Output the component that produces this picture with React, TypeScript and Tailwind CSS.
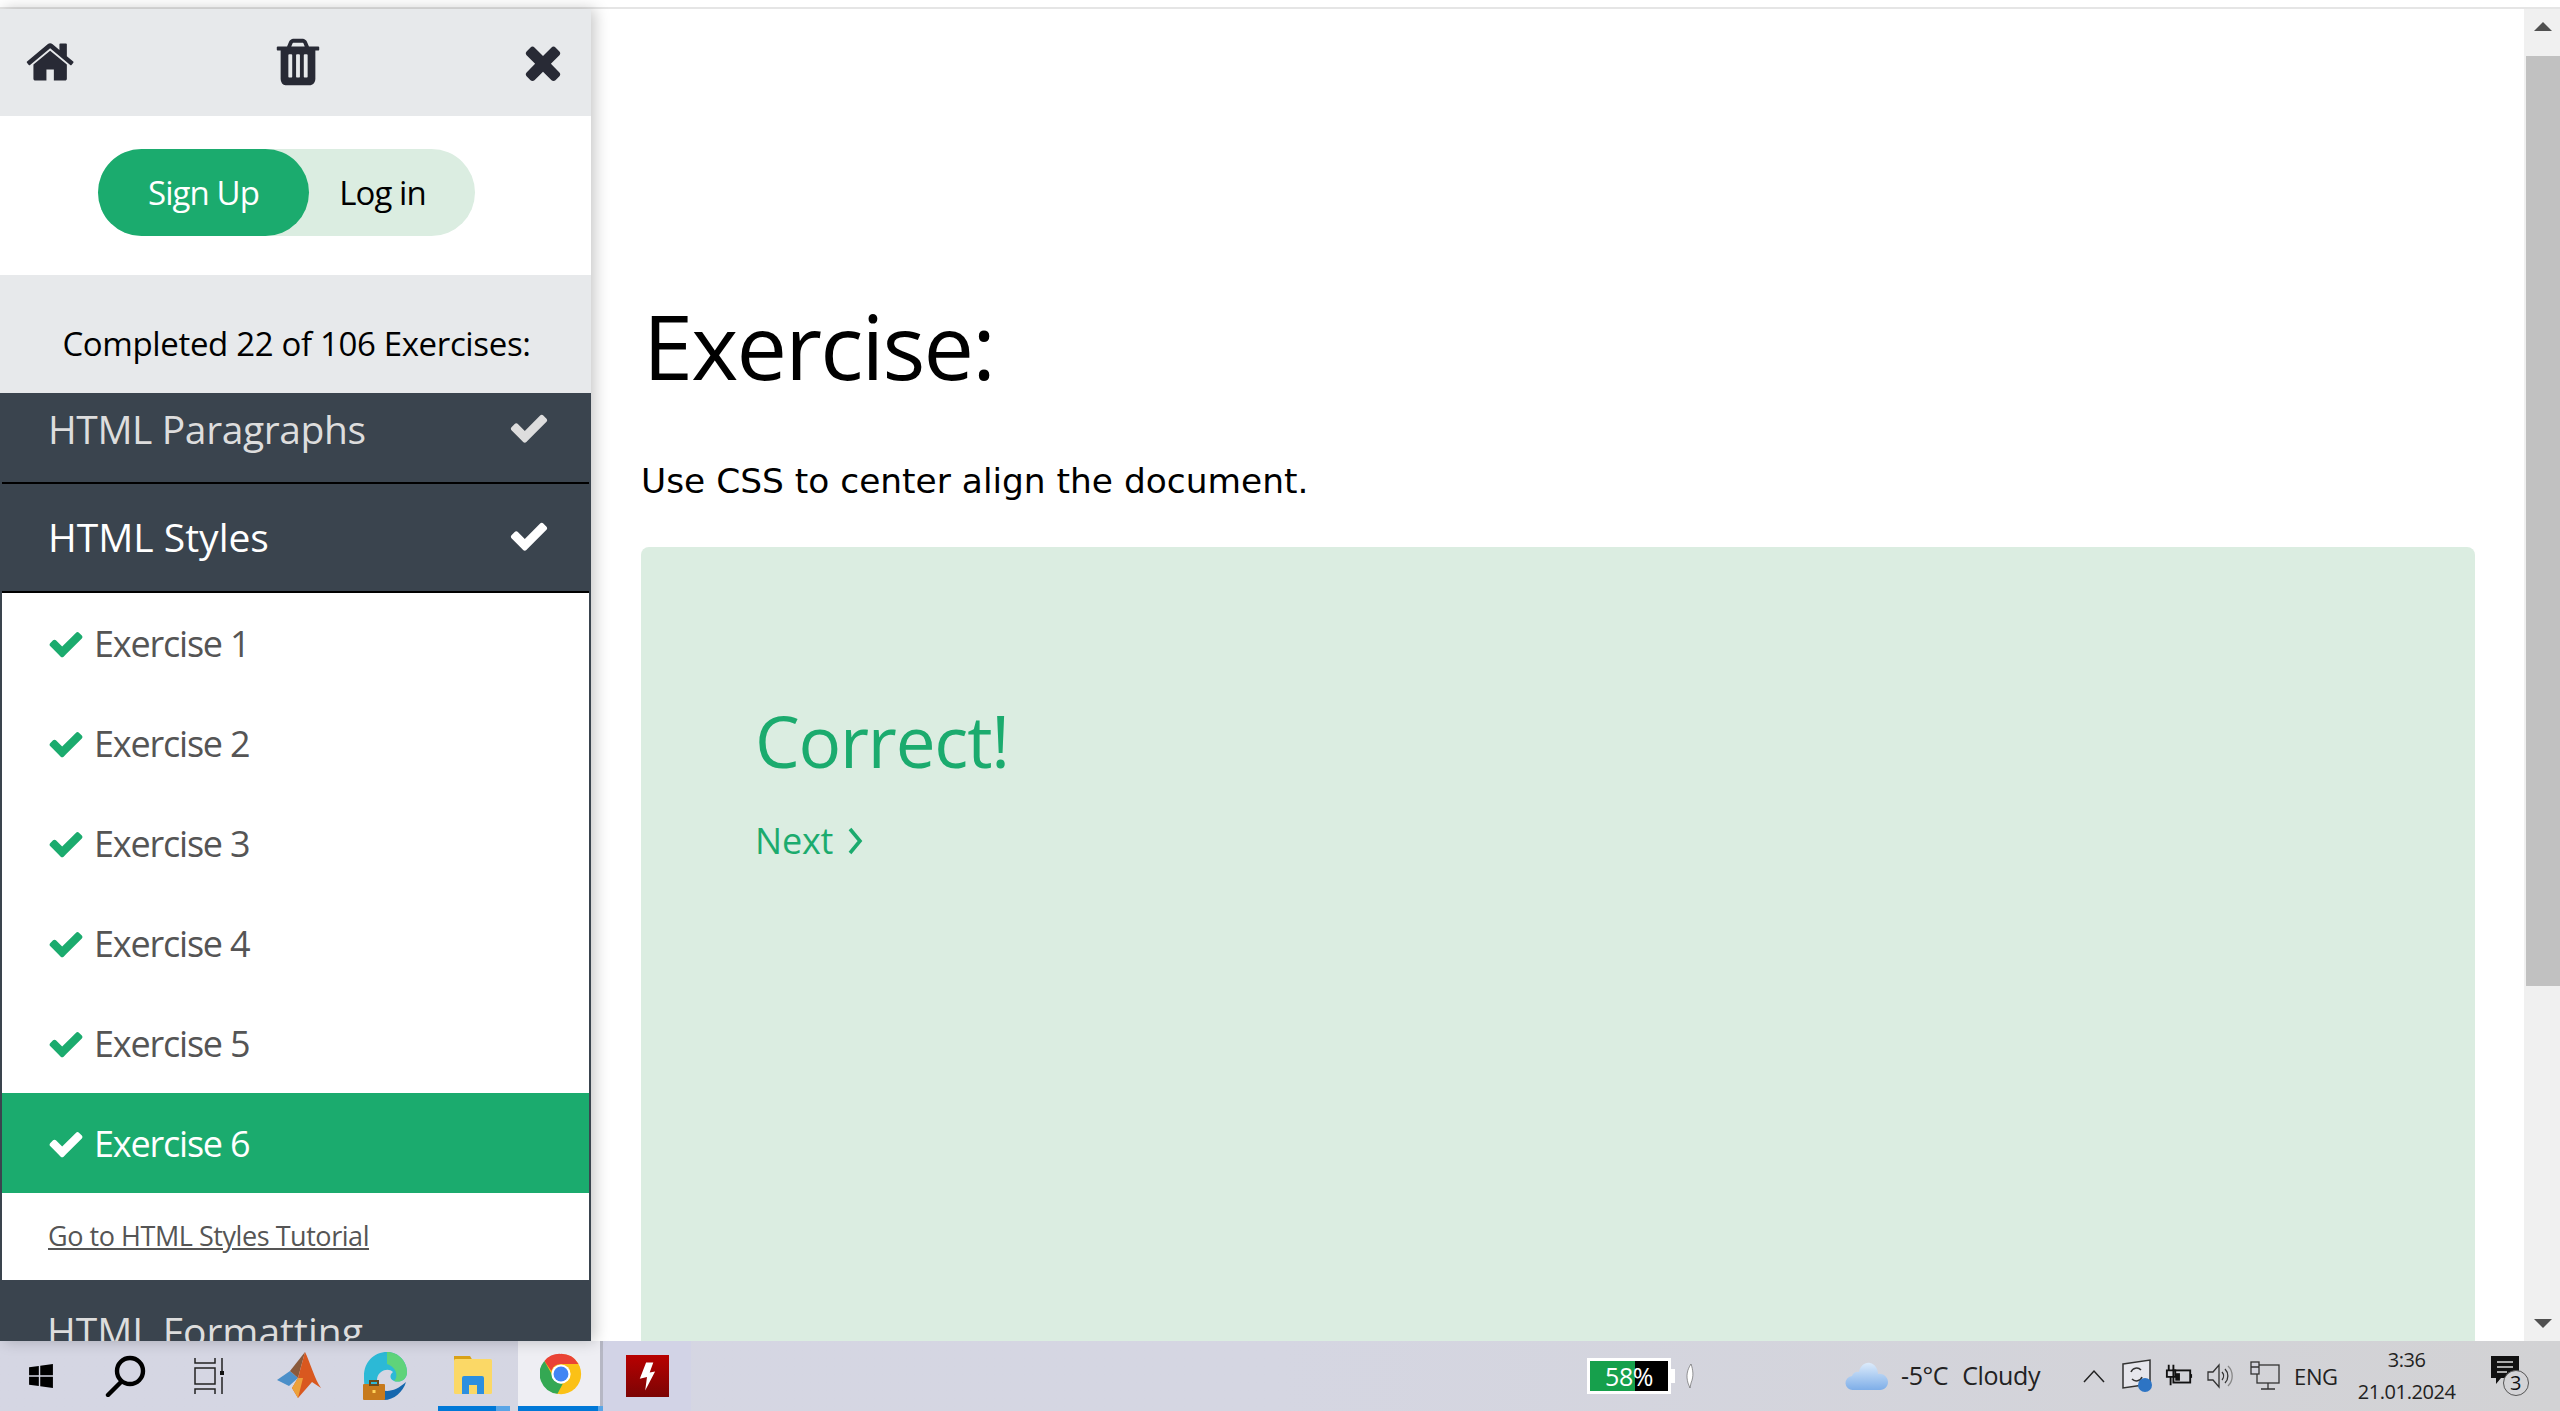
const segoe = "font-['Open_Sans',sans-serif]";

function HomeIcon({ className }: { className?: string }) {
  return (
    <svg viewBox="0 0 1792 1792" className={className} fill="currentColor">
      <path d="M1408 992v480q0 26-19 45t-45 19h-384v-384h-256v384h-384q-26 0-45-19t-19-45v-480q0-1 .5-3t.5-3l575-474 575 474q1 2 1 6zm223-69l-62 74q-8 9-21 11h-3q-13 0-21-7l-692-577-692 577q-12 8-24 7-13-2-21-11l-62-74q-8-10-7-23.5t11-21.5l719-599q32-26 76-26t76 26l244 204v-195q0-14 9-23t23-9h192q14 0 23 9t9 23v408l219 182q10 8 11 21.5t-7 23.5z" />
    </svg>
  );
}

function TrashIcon({ className }: { className?: string }) {
  return (
    <svg viewBox="0 0 1792 1792" className={className} fill="currentColor">
      <path d="M704 1376v-704q0-14-9-23t-23-9h-64q-14 0-23 9t-9 23v704q0 14 9 23t23 9h64q14 0 23-9t9-23zm256 0v-704q0-14-9-23t-23-9h-64q-14 0-23 9t-9 23v704q0 14 9 23t23 9h64q14 0 23-9t9-23zm256 0v-704q0-14-9-23t-23-9h-64q-14 0-23 9t-9 23v704q0 14 9 23t23 9h64q14 0 23-9t9-23zm-544-992h448l-48-117q-7-9-17-11h-317q-10 2-17 11zm928 32v64q0 14-9 23t-23 9h-96v948q0 83-47 143.5t-113 60.5h-832q-66 0-113-58.5t-47-141.5v-952h-96q-14 0-23-9t-9-23v-64q0-14 9-23t23-9h309l70-167q15-37 54-63t79-26h320q40 0 79 26t54 63l70 167h309q14 0 23 9t9 23z" />
    </svg>
  );
}

function CloseIcon({ className }: { className?: string }) {
  return (
    <svg viewBox="0 0 1792 1792" className={className} fill="currentColor">
      <path d="M1490 1322q0 40-28 68l-136 136q-28 28-68 28t-68-28l-294-294-294 294q-28 28-68 28t-68-28l-136-136q-28-28-28-68t28-68l294-294-294-294q-28-28-28-68t28-68l136-136q28-28 68-28t68 28l294 294 294-294q28-28 68-28t68 28l136 136q28 28 28 68t-28 68l-294 294 294 294q28 28 28 68z" />
    </svg>
  );
}

function CheckIcon({ className }: { className?: string }) {
  return (
    <svg viewBox="0 0 1792 1792" className={className} fill="currentColor">
      <path d="M1671 566q0 40-28 68l-724 724-136 136q-28 28-68 28t-68-28l-136-136-362-362q-28-28-28-68t28-68l136-136q28-28 68-28t68 28l294 295 656-657q28-28 68-28t68 28l136 136q28 28 28 68z" />
    </svg>
  );
}

function Windows() {
  return (
    <svg viewBox="0 0 24 24" className="w-[26px] h-[26px]" fill="#000">
      <path d="M1 4l9-1.3V11.3H1zM11.3 2.5L23 1v10.3H11.3zM1 12.7h9v8.6L1 20zM11.3 12.7H23V23l-11.7-1.6z" />
    </svg>
  );
}

function Search() {
  return (
    <svg viewBox="0 0 42 42" className="w-[42px] h-[42px]" fill="none" stroke="#000">
      <circle cx="25" cy="16" r="13" strokeWidth="4.4" />
      <path d="M16 27L3 40" strokeWidth="4.4" strokeLinecap="round" />
    </svg>
  );
}

function TaskView() {
  return (
    <svg viewBox="0 0 30 36" className="w-[30px] h-[36px]" fill="none" stroke="#222" strokeWidth="1.5">
      <path d="M1 0v5h20V0M1 10h20v16H1zM1 36v-5h20v5M28 0v13M28 19v17" />
      <rect x="26" y="13" width="4" height="4" fill="#111" stroke="none" />
    </svg>
  );
}

function Matlab() {
  return (
    <svg viewBox="0 0 44 48" className="w-[44px] h-[48px]">
      <path d="M0 28L13 19 21 26 12 34z" fill="#4b8fc9" />
      <path d="M13 19L28 0 21 26z" fill="#8a5a3c" />
      <path d="M28 0C33 10 38 28 44 36L35 30 21 46 15 36 21 26z" fill="#d9581f" />
      <path d="M21 26L15 36 21 46 26 26z" fill="#eda13a" />
    </svg>
  );
}

function EdgeDev() {
  return (
    <svg viewBox="0 0 44 48" className="w-[44px] h-[48px]">
      <path d="M1 24C1 10 11 0 24 0c12 0 20 10 20 20 0 8-7 11-13 9-5-2-4-7-1-9-3-3-8-3-12 0-4 3-5 8-3 12L2 36C1 32 1 28 1 24z" fill="#2cb9d6" />
      <path d="M24 0c12 0 20 10 20 20 0 8-7 11-13 9 4-3 4-13-7-17z" fill="#5fd37a" />
      <path d="M14 34c6 8 18 6 29-4-3 10-12 18-22 18-3 0-5-1-7-2z" fill="#1567ae" />
      <rect x="0" y="32" width="22" height="16" rx="1" fill="#c77a1c" />
      <rect x="7" y="29" width="8" height="4" fill="none" stroke="#6b4a1a" strokeWidth="2" />
      <rect x="9.5" y="38" width="3" height="3" fill="#ffd35a" />
    </svg>
  );
}

function Folder() {
  return (
    <svg viewBox="0 0 38 44" className="w-[38px] h-[44px]">
      <path d="M0 4h16l3 5H0z" fill="#d9a116" />
      <rect x="0" y="7" width="38" height="35" rx="1.5" fill="#fbd866" />
      <path d="M8 42V26a2 2 0 012-2h18a2 2 0 012 2v16h-7v-9h-8v9z" fill="#2c8fe0" />
    </svg>
  );
}

function Chrome() {
  return (
    <svg viewBox="0 0 48 48" className="w-[42px] h-[42px]">
      <circle cx="24" cy="24" r="23" fill="#fbc116" />
      <path d="M24 1a23 23 0 0120 11.5H24a11.5 11.5 0 00-11 8L5 9A23 23 0 0124 1z" fill="#ea4335" />
      <path d="M5 9l9 16a11.5 11.5 0 0012 10L20 46.7A23 23 0 015 9z" fill="#34a853" />
      <circle cx="24" cy="24" r="11" fill="#fff" />
      <circle cx="24" cy="24" r="8.5" fill="#4285f4" />
    </svg>
  );
}

function FlashBox() {
  return (
    <div className="w-[43px] h-[42px] bg-gradient-to-b from-[#b80000] to-[#7c0404] flex items-center justify-center">
      <svg viewBox="0 0 20 34" className="w-[18px] h-[34px]" fill="#fff">
        <path d="M9 2l8 0-4 11 6-1L8 33l2-15-8 2z" />
      </svg>
    </div>
  );
}

function Cloud() {
  return (
    <svg viewBox="0 0 44 30" className="w-[44px] h-[30px]">
      <defs>
        <linearGradient id="cloudFill" x1="0" y1="0" x2="0" y2="1">
          <stop offset="0" stopColor="#dcebfb" />
          <stop offset="1" stopColor="#7eaee8" />
        </linearGradient>
      </defs>
      <path d="M8 29a7 7 0 01-1-14c1-3 4-5 7-4 1-6 6-10 11-9 5 1 8 6 8 11 6-1 10 4 10 8s-3 8-8 8z" fill="url(#cloudFill)" />
    </svg>
  );
}

function TrayIcons() {
  return (
    <div className="flex items-center text-[#222]">
      <svg viewBox="0 0 24 14" className="w-[24px] h-[14px] mr-[16px]" fill="none" stroke="#222" strokeWidth="1.5">
        <path d="M2 13L12 2l10 11" />
      </svg>
      <svg viewBox="0 0 30 34" className="w-[30px] h-[34px] mr-[13px]" fill="none">
        <path d="M1 5L28 1v24L1 29z" fill="#e6e6ec" stroke="#333" strokeWidth="1.5" />
        <path d="M9 13a6 6 0 0110-2M20 18a6 6 0 01-10 2" stroke="#333" strokeWidth="1.5" />
        <circle cx="23" cy="26" r="7" fill="#2d74c4" />
      </svg>
      <svg viewBox="0 0 30 24" className="w-[28px] h-[24px] mr-[14px]" fill="none" stroke="#111" strokeWidth="2">
        <path d="M4 0v6M9 0v6M2 6h9v7H2zM6 13v9" />
        <rect x="9" y="6" width="18" height="13" />
        <rect x="11" y="9" width="5" height="8" fill="#111" stroke="none" />
        <path d="M28 10v4" />
      </svg>
      <svg viewBox="0 0 26 26" className="w-[26px] h-[26px] mr-[17px]" fill="none" stroke="#333" strokeWidth="1.3">
        <path d="M1 9h5l6-7v22l-6-7H1z" />
        <path d="M15 9a6 6 0 010 8M18 6a10 10 0 010 14" />
        <path d="M21 3a14 14 0 010 20" stroke="#888" />
      </svg>
      <svg viewBox="0 0 30 30" className="w-[30px] h-[30px]" fill="none" stroke="#333" strokeWidth="1.3">
        <rect x="7" y="4" width="22" height="18" />
        <rect x="1" y="1" width="8" height="12" fill="#d3d3dc" />
        <path d="M1 6h8M18 22v6M11 28h14" />
      </svg>
    </div>
  );
}

function ExerciseRow({ n, active }: { n: number; active?: boolean }) {
  return (
    <div
      className={`h-[100px] flex items-center pl-[45px] pt-[2px] text-[36px] ${
        active ? "bg-[#1bab6e] text-white" : "bg-white text-[#555]"
      }`}
    >
      <CheckIcon className={`w-[38px] h-[38px] mr-[9px] ${active ? "text-white" : "text-[#1bab6e]"}`} />
      <span className="tracking-[-1.2px]">Exercise {n}</span>
    </div>
  );
}

function Sidebar() {
  return (
    <aside className={`relative z-10 w-[591px] shrink-0 flex flex-col overflow-hidden shadow-[4px_0_14px_rgba(0,0,0,0.22)] ${segoe}`}>
      <div className="h-[107px] shrink-0 bg-[#e7e9eb] flex items-center justify-between pb-[2px] pl-[26px] pr-[22px] text-[#282a35]">
        <HomeIcon className="w-[52px] h-[52px]" />
        <TrashIcon className="w-[54px] h-[54px]" />
        <CloseIcon className="w-[52px] h-[52px]" />
      </div>
      <div className="h-[159px] shrink-0 bg-white flex items-center justify-center pr-[18px] pb-[6px]">
        <div className="w-[377px] h-[87px] rounded-full bg-[#dbede1] flex items-center text-[33px] tracking-[-0.9px]">
          <span className="w-[211px] h-full rounded-full bg-[#1bab6e] text-white flex items-center justify-center">Sign Up</span>
          <span className="flex-1 text-center text-black pr-[19px]">Log in</span>
        </div>
      </div>
      <div className="h-[118px] shrink-0 bg-[#e7e9eb] flex items-end justify-center pb-[25px] pl-[2px] text-[33px] tracking-[-0.35px] text-black">
        Completed 22 of 106 Exercises:
      </div>

      <div className="flex-1 min-h-0 bg-[#3a444e] overflow-hidden">
        <div className="h-[89px] flex items-center justify-between pb-[16px] pl-[48px] pr-[41px] text-[39px] tracking-[-0.4px] text-[#ddd]">
          <span>HTML Paragraphs</span>
          <CheckIcon className="w-[42px] h-[42px] mb-[3px] text-[#ddd]" />
        </div>
        <div className="h-[2px] mx-[2px] bg-black" />
        <div className="h-[107px] flex items-center justify-between pl-[48px] pr-[41px] text-[39px] text-white">
          <span>HTML Styles</span>
          <CheckIcon className="w-[42px] h-[42px] mb-[3px] text-white" />
        </div>
        <div className="mx-[2px] bg-white">
          <div className="h-[2px] bg-black" />
          {[1, 2, 3, 4, 5].map((n) => (
            <ExerciseRow key={n} n={n} />
          ))}
          <ExerciseRow n={6} active />
          <div className="h-[87px] flex items-center pl-[46px] text-[27px] tracking-[-0.45px] text-[#555] underline">
            Go to HTML Styles Tutorial
          </div>
        </div>
        <div className="pt-[22px] pl-[47px] text-[39px] leading-[58px] text-[#ddd]">HTML Formatting</div>
      </div>
    </aside>
  );
}

function Scrollbar() {
  return (
    <div className="w-[36px] shrink-0 bg-[#f0f0f0] flex flex-col">
      <div className="h-[47px] shrink-0 flex justify-center pt-[13px] pl-[2px]">
        <div className="w-0 h-0 border-x-[9px] border-x-transparent border-b-[9px] border-b-[#505050]" />
      </div>
      <div className="h-[930px] shrink-0 ml-[2px] bg-[#c1c1c1]" />
      <div className="flex-1 flex items-end justify-center pl-[2px] pb-[13px]">
        <div className="w-0 h-0 border-x-[9px] border-x-transparent border-t-[9px] border-t-[#505050]" />
      </div>
    </div>
  );
}

function Content() {
  return (
    <main className="flex-1 min-w-0 flex flex-col pl-[50px] pr-[49px] overflow-hidden">
      <h1 className={`mt-[276px] ml-[2px] text-[90px] leading-[120px] tracking-[-1.8px] text-black ${segoe}`}>Exercise:</h1>
      <p className="mt-[52px] text-[34.4px] leading-[48px] text-black font-['DejaVu_Sans',sans-serif]">Use CSS to center align the document.</p>
      <div className={`mt-[42px] flex-1 rounded-t-[8px] bg-[#dbede1] pl-[114px] pt-[146px] text-[#1bab6e] ${segoe}`}>
        <div className="text-[71px] leading-[96px] tracking-[-1.2px]">Correct!</div>
        <div className="mt-[28px] flex items-center text-[36px] leading-[48px] tracking-[-0.2px]">
          Next
          <svg viewBox="0 0 18 28" className="ml-[13px] w-[18px] h-[28px]" fill="none" stroke="#1bab6e" strokeWidth="3.6">
            <path d="M4 2l10 12L4 26" />
          </svg>
        </div>
      </div>
    </main>
  );
}

function Taskbar() {
  return (
    <footer className={`h-[70px] shrink-0 flex items-center bg-gradient-to-r from-[#d5d6e3] via-[#d5d6e2] to-[#d2d2d4] ${segoe}`}>
      <div className="w-[82px] h-full flex items-center justify-center"><Windows /></div>
      <div className="w-[84px] h-full flex items-center justify-center pl-[3px]"><Search /></div>
      <div className="w-[86px] h-full flex items-center justify-center"><TaskView /></div>
      <div className="w-[90px] h-full flex items-center justify-center pl-[3px]"><Matlab /></div>
      <div className="w-[86px] h-full flex items-center justify-center"><EdgeDev /></div>
      <div className="w-[90px] h-full flex flex-col">
        <div className="flex-1 flex items-center justify-center"><Folder /></div>
        <div className="h-[5px] ml-[10px] mr-[8px] flex">
          <div className="flex-1 bg-[#0078d7]" />
          <div className="w-[14px] bg-[#5aa5e6]" />
        </div>
      </div>
      <div className="w-[85px] h-full flex flex-col">
        <div className="flex-1 flex">
          <div className="flex-1 bg-[#eeeef3] flex items-center justify-center pl-[3px]"><Chrome /></div>
          <div className="w-[3px] bg-[#b6b7c4]" />
        </div>
        <div className="h-[5px] flex">
          <div className="flex-1 bg-[#0078d7]" />
          <div className="w-[5px] bg-[#5aa5e6]" />
        </div>
      </div>
      <div className="w-[88px] h-full flex items-center justify-center bg-[#d2d3e6]"><FlashBox /></div>

      <div className="ml-[896px] flex items-center">
        <div className="w-[84px] h-[36px] border-[3px] border-white bg-black flex text-[25px] leading-[30px] text-white relative">
          <div className="w-[58%] bg-[#16a04c]" />
          <span className="absolute inset-0 flex items-center justify-center tracking-[-0.5px]">58%</span>
        </div>
        <div className="w-[4px] h-[14px] bg-white" />
      </div>
      <svg viewBox="0 0 10 26" className="ml-[10px] w-[10px] h-[26px]" fill="#fff" stroke="#555" strokeWidth="0.6">
        <path d="M6 1C2 7 1 13 3 20l2 5 1-5c3-7 2-13 0-19z" />
      </svg>
      <div className="ml-[150px] flex items-center text-[25px] tracking-[-0.4px] text-[#222]">
        <Cloud />
        <span className="ml-[12px]">-5°C</span>
        <span className="ml-[14px]">Cloudy</span>
      </div>
      <div className="ml-[42px]"><TrayIcons /></div>
      <span className="ml-[14px] text-[22px] tracking-[-0.4px] text-[#222]">ENG</span>
      <div className="ml-[19px] w-[100px] flex flex-col items-center text-[20px] leading-[32px] tracking-[-0.4px] text-[#222]">
        <span>3:36</span>
        <span>21.01.2024</span>
      </div>
      <div className="relative ml-[34px] w-[38px] h-[40px]">
        <svg viewBox="0 0 28 30" className="w-[28px] h-[30px]" fill="#111">
          <path d="M0 0h28v22H10l-5 6v-6H0z" />
          <path d="M6 6h16M6 11h16M6 16h10" stroke="#ddd" strokeWidth="1.5" />
        </svg>
        <span className="absolute right-0 bottom-0 w-[26px] h-[26px] rounded-full border border-[#555] bg-[#d3d3d6] flex items-center justify-center text-[20px] leading-none text-[#111]">3</span>
      </div>
    </footer>
  );
}

export default function App() {
  return (
    <div className="h-screen flex flex-col overflow-hidden bg-white">
      <div className="h-[9px] shrink-0 bg-white border-b-[2px] border-[#e5e5e5]" />
      <div className="flex-1 min-h-0 flex">
        <Sidebar />
        <Content />
        <Scrollbar />
      </div>
      <Taskbar />
    </div>
  );
}
